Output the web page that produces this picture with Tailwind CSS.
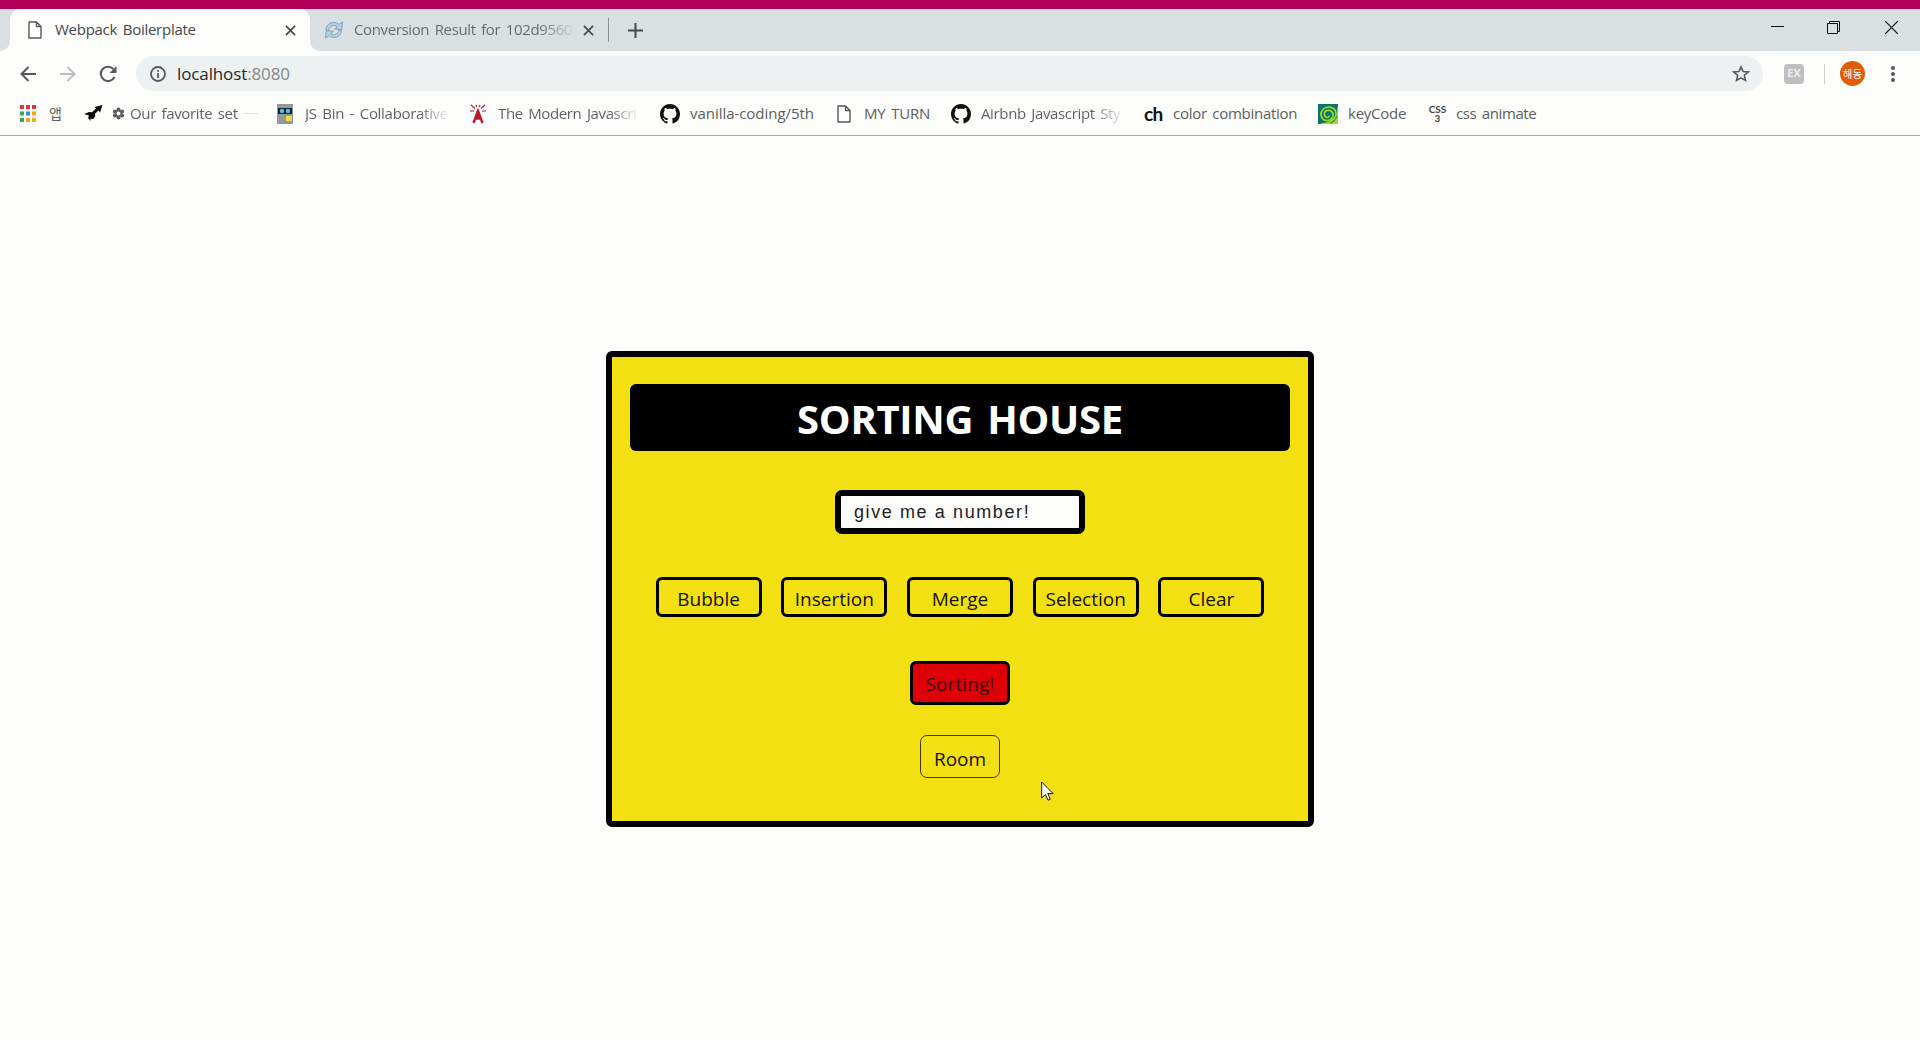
<!DOCTYPE html>
<html lang="ko">
<head>
<meta charset="utf-8">
<title>Webpack Boilerplate</title>
<script src="https://cdn.jsdelivr.net/npm/@tailwindcss/browser@4"></script>
</head>
<body class="flex h-screen flex-col overflow-hidden bg-[#fdfdfc] font-['Open_Sans','Noto_Sans_CJK_KR',sans-serif] text-[15px] text-[#5a5d61]">
<svg class="hidden">
  <symbol id="doc" viewBox="0 0 14 18"><path d="M1 1h7.5L13 5.5V17H1zM8.5 1v4.5H13" fill="none" stroke="#55585c" stroke-width="1.4" stroke-linejoin="round"/></symbol>
  <symbol id="github" viewBox="0 0 16 16"><path fill="#111" d="M8 0C3.58 0 0 3.58 0 8c0 3.54 2.29 6.53 5.47 7.59.4.07.55-.17.55-.38 0-.19-.01-.82-.01-1.49-2.01.37-2.53-.49-2.69-.94-.09-.23-.48-.94-.82-1.13-.28-.15-.68-.52-.01-.53.63-.01 1.08.58 1.23.82.72 1.21 1.87.87 2.33.66.07-.52.28-.87.51-1.07-1.78-.2-3.64-.89-3.64-3.95 0-.87.31-1.59.82-2.15-.08-.2-.36-1.02.08-2.12 0 0 .67-.21 2.2.82.64-.18 1.32-.27 2-.27s1.36.09 2 .27c1.53-1.04 2.2-.82 2.2-.82.44 1.1.16 1.92.08 2.12.51.56.82 1.27.82 2.15 0 3.07-1.87 3.75-3.65 3.95.29.25.54.73.54 1.48 0 1.07-.01 1.93-.01 2.2 0 .21.15.46.55.38A8.01 8.01 0 0 0 16 8c0-4.42-3.58-8-8-8z"/></symbol>
  <symbol id="close" viewBox="0 0 12 12"><path d="M1 1l10 10M11 1L1 11" stroke="#46494c" stroke-width="1.8"/></symbol>
</svg>

<div class="h-[9px] shrink-0 bg-[#b4005a]"></div>

<!-- Tab strip -->
<header class="flex h-[42px] shrink-0 bg-[#dadfe1]">
  <div class="w-[10px] bg-[#fdfdfc]"><div class="h-full rounded-br-[10px] bg-[#dadfe1]"></div></div>
  <div class="flex w-[300px] items-center rounded-t-[10px] bg-[#fdfdfc] pl-[18px]">
    <svg class="h-[18px] w-[14px]"><use href="#doc"/></svg>
    <span class="-mt-[2px] ml-[13px] w-[229px] whitespace-nowrap tracking-[-0.27px] [word-spacing:2px] text-[#44474b]">Webpack Boilerplate</span>
    <svg class="ml-px h-[11px] w-[11px]"><use href="#close"/></svg>
  </div>
  <div class="w-[10px] bg-[#fdfdfc]"><div class="h-full rounded-bl-[10px] bg-[#dadfe1]"></div></div>
  <div class="flex items-center pl-[4px]">
    <svg class="h-[18px] w-[20px]" viewBox="0 0 20 18" fill="none"><path d="M2 9.5C2 4 6 1.500 10 1.500c2 0 3.500.6 5 2L18.500 1l-.8 7.500-7-.5 2.700-2.500C10 3 5.500 4.500 4.500 9.500z" fill="#b4d3ea" stroke="#7d9fba"/><path d="M17.500 9c-.3 5-4 7.500-7.500 7.500-2 0-3.700-.7-5-2L1.500 17l.8-7.300 7 .5-2.500 2.500c3.500 2.300 7.200.8 8.200-3.700z" fill="#b4d3ea" stroke="#7d9fba"/></svg>
    <span class="-mt-[2px] ml-[10px] w-[218px] overflow-hidden bg-linear-to-r from-[#64686c] from-85% to-[#64686c]/10 bg-clip-text whitespace-nowrap tracking-[-0.37px] [word-spacing:2px] text-transparent">Conversion Result for 102d9560</span>
    <svg class="ml-[11px] h-[11px] w-[11px]"><use href="#close"/></svg>
    <div class="ml-[14px] h-[24px] w-px bg-[#8b8f92]"></div>
    <svg class="ml-[19px] h-[15px] w-[15px]" viewBox="0 0 15 15"><path d="M7.500 0v15M0 7.500h15" stroke="#46494c" stroke-width="2"/></svg>
  </div>
  <div class="mr-[22px] ml-auto flex items-start pt-[12px]">
    <svg class="h-[13px] w-[13px]" viewBox="0 0 13 13"><path d="M0 5.500h13" stroke="#111"/></svg>
    <svg class="ml-[43px] h-[13px] w-[13px]" viewBox="0 0 13 13"><path d="M.5 2.500h10v10H.5zM2.500 2.500v-2h10v10h-2" fill="none" stroke="#111"/></svg>
    <svg class="ml-[45px] h-[13px] w-[13px]" viewBox="0 0 13 13"><path d="M0 0l13 13M13 0L0 13" stroke="#111" stroke-width="1.200"/></svg>
  </div>
</header>

<!-- Toolbar -->
<div class="flex h-[45px] shrink-0 items-center pl-[20px]">
  <svg class="h-[16px] w-[16px]" viewBox="0 0 16 16"><path d="M16 8H1.500M8.500 1L1.500 8l7 7" fill="none" stroke="#55585c" stroke-width="2"/></svg>
  <svg class="ml-[24px] h-[16px] w-[16px]" viewBox="0 0 16 16"><path d="M0 8h14.500M7.500 1l7 7-7 7" fill="none" stroke="#bbbdc0" stroke-width="2"/></svg>
  <svg class="ml-[23px] h-[18px] w-[18px]" viewBox="0 0 18 18"><path d="M15.500 12A7.200 7.200 0 1 1 14.300 4" fill="none" stroke="#55585c" stroke-width="2"/><path d="M17.500 1v7h-7z" fill="#55585c"/></svg>
  <div class="ml-[19px] flex h-[35px] w-[1627px] items-center rounded-full bg-[#eef1f1] pl-[14px]">
    <svg class="h-[16px] w-[16px]" viewBox="0 0 16 16"><circle cx="8" cy="8" r="7" fill="none" stroke="#55585c" stroke-width="1.800"/><path d="M8 7v5M8 4v1.800" stroke="#55585c" stroke-width="1.800"/></svg>
    <span class="ml-[11px] text-[17px] tracking-[-0.12px] text-[#26282b]">localhost<span class="text-[#85888c]">:8080</span></span>
    <svg class="mr-[13px] ml-auto h-[17px] w-[18px]" viewBox="0 0 18 17"><path d="M9 1.800l2.100 4.700 5.100.5-3.900 3.400 1.200 5L9 12.800l-4.500 2.600 1.200-5L1.800 7l5.100-.5z" fill="none" stroke="#55585c" stroke-width="1.600"/></svg>
  </div>
  <div class="ml-[21px] flex h-[20px] w-[20px] items-center justify-center rounded-[4px] bg-[#bebfc0] text-[11px] font-bold text-[#eeeeee]">EX</div>
  <div class="ml-[20px] h-[20px] w-px bg-[#c9cbcd]"></div>
  <div class="ml-[15px] flex h-[25px] w-[25px] items-center justify-center rounded-full bg-[#e25c04] font-['Noto_Sans_CJK_KR',sans-serif] text-[10.500px] text-white">해동</div>
  <svg class="ml-[26px] h-[16px] w-[4px]" viewBox="0 0 4 16" fill="#55585c"><circle cx="2" cy="2" r="2"/><circle cx="2" cy="8" r="2"/><circle cx="2" cy="14" r="2"/></svg>
</div>

<!-- Bookmarks bar -->
<nav class="flex h-[40px] shrink-0 items-center border-b border-[#a9aaa6] pb-[4px] pl-[20px] whitespace-nowrap">
  <svg class="h-[17px] w-[16px]" viewBox="0 0 16 17"><path fill="#dc3a32" d="M0 0h4v4H0zM6 0h4v4H6zM12 0h4v4h-4z"/><path fill="#35a853" d="M0 6.500h4v4H0zM0 13h4v4H0z"/><path fill="#3b8beb" d="M6 6.500h4v4H6z"/><path fill="#f0a91c" d="M12 6.500h4v4h-4zM6 13h4v4H6zM12 13h4v4h-4z"/></svg>
  <span class="ml-[13px] w-[35px] font-['Noto_Sans_CJK_KR',sans-serif] text-[14px]">앱</span>
  <svg class="h-[17px] w-[19px]" viewBox="0 0 19 17"><path d="M0 9l5-2 3 .3 4-3.800L10.500 2 18.500 0 16 7.500l-1.500-2-3.500 3.300.2 2.700L9 14l-2.500-.3L6.500 16 4 13l1-2.500z" fill="#0b0b0b"/></svg>
  <span class="ml-[9px] flex w-[18px]"><svg class="h-[13px] w-[13px]" viewBox="0 0 13 13"><g fill="#5a5d61"><circle cx="6.500" cy="2.400" r="2"/><circle cx="10.100" cy="4.500" r="2"/><circle cx="10.100" cy="8.600" r="2"/><circle cx="6.500" cy="10.600" r="2"/><circle cx="2.900" cy="8.600" r="2"/><circle cx="2.900" cy="4.500" r="2"/><circle cx="6.500" cy="6.500" r="3.500"/></g><circle cx="6.500" cy="6.500" r="2" fill="#fdfdfc"/></svg></span>
  <span class="w-[147px] bg-linear-to-r from-[#5a5d61] from-74% to-[#5a5d61]/30 to-76% bg-clip-text tracking-[-0.35px] [word-spacing:2px] text-transparent">Our favorite set ─</span>
  <svg class="h-[20px] w-[16px]" viewBox="0 0 16 20"><path fill="#96999b" d="M0 0h16v20H0z"/><path fill="#17262e" d="M1 4h14v6H1z"/><circle cx="5" cy="7" r="2.200" fill="#56bfe0"/><circle cx="11" cy="7" r="2.200" fill="#56bfe0"/><path fill="#ecdc4a" d="M9 12h6v5H9z"/></svg>
  <span class="ml-[12px] w-[165px]"><span class="block w-[142px] overflow-hidden bg-linear-to-r from-[#5a5d61] from-80% to-[#5a5d61]/10 bg-clip-text tracking-[-0.3px] [word-spacing:2px] text-transparent">JS Bin - Collaborative</span></span>
  <svg class="h-[20px] w-[16px]" viewBox="0 0 16 20" fill="none" stroke="#b8192f"><path d="M3.500 19L8 7l4.500 12M5.500 14.500h5" stroke-width="2.400"/><path d="M8 7v7" stroke-width="2.400"/><path d="M1 1l4 3.500M15 1l-4 3.500M0 7h4M16 7h-4M6 1l.7 2M10 1l-.7 2" stroke-width="1.200"/></svg>
  <span class="ml-[12px] w-[162px]"><span class="block w-[139px] overflow-hidden bg-linear-to-r from-[#5a5d61] from-80% to-[#5a5d61]/10 bg-clip-text tracking-[-0.38px] [word-spacing:2px] text-transparent">The Modern Javascri</span></span>
  <svg class="h-[20px] w-[20px]"><use href="#github"/></svg>
  <span class="ml-[10px] w-[147px] tracking-[-0.04px]">vanilla-coding/5th</span>
  <svg class="h-[18px] w-[14px]"><use href="#doc"/></svg>
  <span class="ml-[13px] w-[87px] tracking-[-0.2px] [word-spacing:2px]">MY TURN</span>
  <svg class="h-[20px] w-[20px]"><use href="#github"/></svg>
  <span class="ml-[10px] w-[163px]"><span class="block w-[140px] overflow-hidden bg-linear-to-r from-[#5a5d61] from-80% to-[#5a5d61]/10 bg-clip-text tracking-[-0.36px] [word-spacing:2px] text-transparent">Airbnb Javascript Sty</span></span>
  <span class="w-[19px] font-['Lato',sans-serif] text-[19px] leading-5 font-bold tracking-[-0.6px] text-[#111]">ch</span>
  <span class="ml-[10px] w-[145px] tracking-[-0.28px] [word-spacing:2px]">color combination</span>
  <svg class="h-[20px] w-[20px]" viewBox="0 0 20 20"><path fill="#0c7468" d="M0 0h20v20H0z"/><path d="M20 3v17H3C8 20 19 17 18 9 17.500 3 9 1 5 5.500s-1.500 11 4 11 8-6 4.500-9-8 0-7 3.500 5 3 4.500.5" fill="none" stroke="#9edb22" stroke-width="1.700"/><path fill="#9edb22" d="M20 9v11H9c6 0 10-4 11-11z"/></svg>
  <span class="ml-[10px] w-[81px] tracking-[-0.25px]">keyCode</span>
  <span class="flex w-[17px] flex-col items-center font-['Lato',sans-serif] text-[10px] leading-[9px] font-bold text-[#444]"><span>CSS</span><span>3</span></span>
  <span class="ml-[10px] tracking-[-0.4px] [word-spacing:2px]">css animate</span>
</nav>

<!-- Page -->
<main class="flex flex-1 flex-col items-center pt-[215px] text-[19px] text-[#15140a]">
  <section class="relative flex h-[476px] w-[708px] flex-col items-center rounded-[6px] border-[6px] border-black bg-[#f3e012] pt-[27px]">
    <h1 class="flex h-[67px] w-[660px] items-center justify-center rounded-[6px] bg-black pt-[3px] text-[40px] font-bold tracking-[-0.3px] [word-spacing:4px] text-white">SORTING HOUSE</h1>
    <div class="mt-[39px] flex h-[44px] w-[250px] items-center rounded-[7px] border-[6px] border-black bg-[#fdfdfc] pl-[13px] font-['Liberation_Sans',sans-serif] text-[18px] tracking-[1.6px] text-[#222]">give me a number!</div>
    <div class="mt-[43px] flex gap-[19.700px]">
      <button class="h-[40px] w-[106px] rounded-[6px] border-[3px] border-black pt-[4px] leading-none">Bubble</button>
      <button class="h-[40px] w-[106px] rounded-[6px] border-[3px] border-black pt-[4px] leading-none">Insertion</button>
      <button class="h-[40px] w-[106px] rounded-[6px] border-[3px] border-black pt-[4px] leading-none">Merge</button>
      <button class="h-[40px] w-[106px] rounded-[6px] border-[3px] border-black pt-[4px] leading-none">Selection</button>
      <button class="h-[40px] w-[106px] rounded-[6px] border-[3px] border-black pt-[4px] leading-none">Clear</button>
    </div>
    <button class="mt-[44px] h-[44px] w-[100px] rounded-[6px] border-[3px] border-black bg-[#de0006] pt-[2px] leading-none tracking-[0.1px] text-[#3d0000]">Sorting!</button>
    <button class="mt-[30px] h-[43px] w-[80px] rounded-[7px] border border-[#3c380a] pt-[5px] leading-none">Room</button>
    <svg class="absolute top-[424px] left-[429px] h-[20px] w-[13px]" viewBox="0 0 13 20"><path d="M.7 1v16l3.700-3.500 2.600 5.700 2.300-1-2.500-5.600h5.300z" fill="#fff" stroke="#111"/></svg>
  </section>
</main>
</body>
</html>
